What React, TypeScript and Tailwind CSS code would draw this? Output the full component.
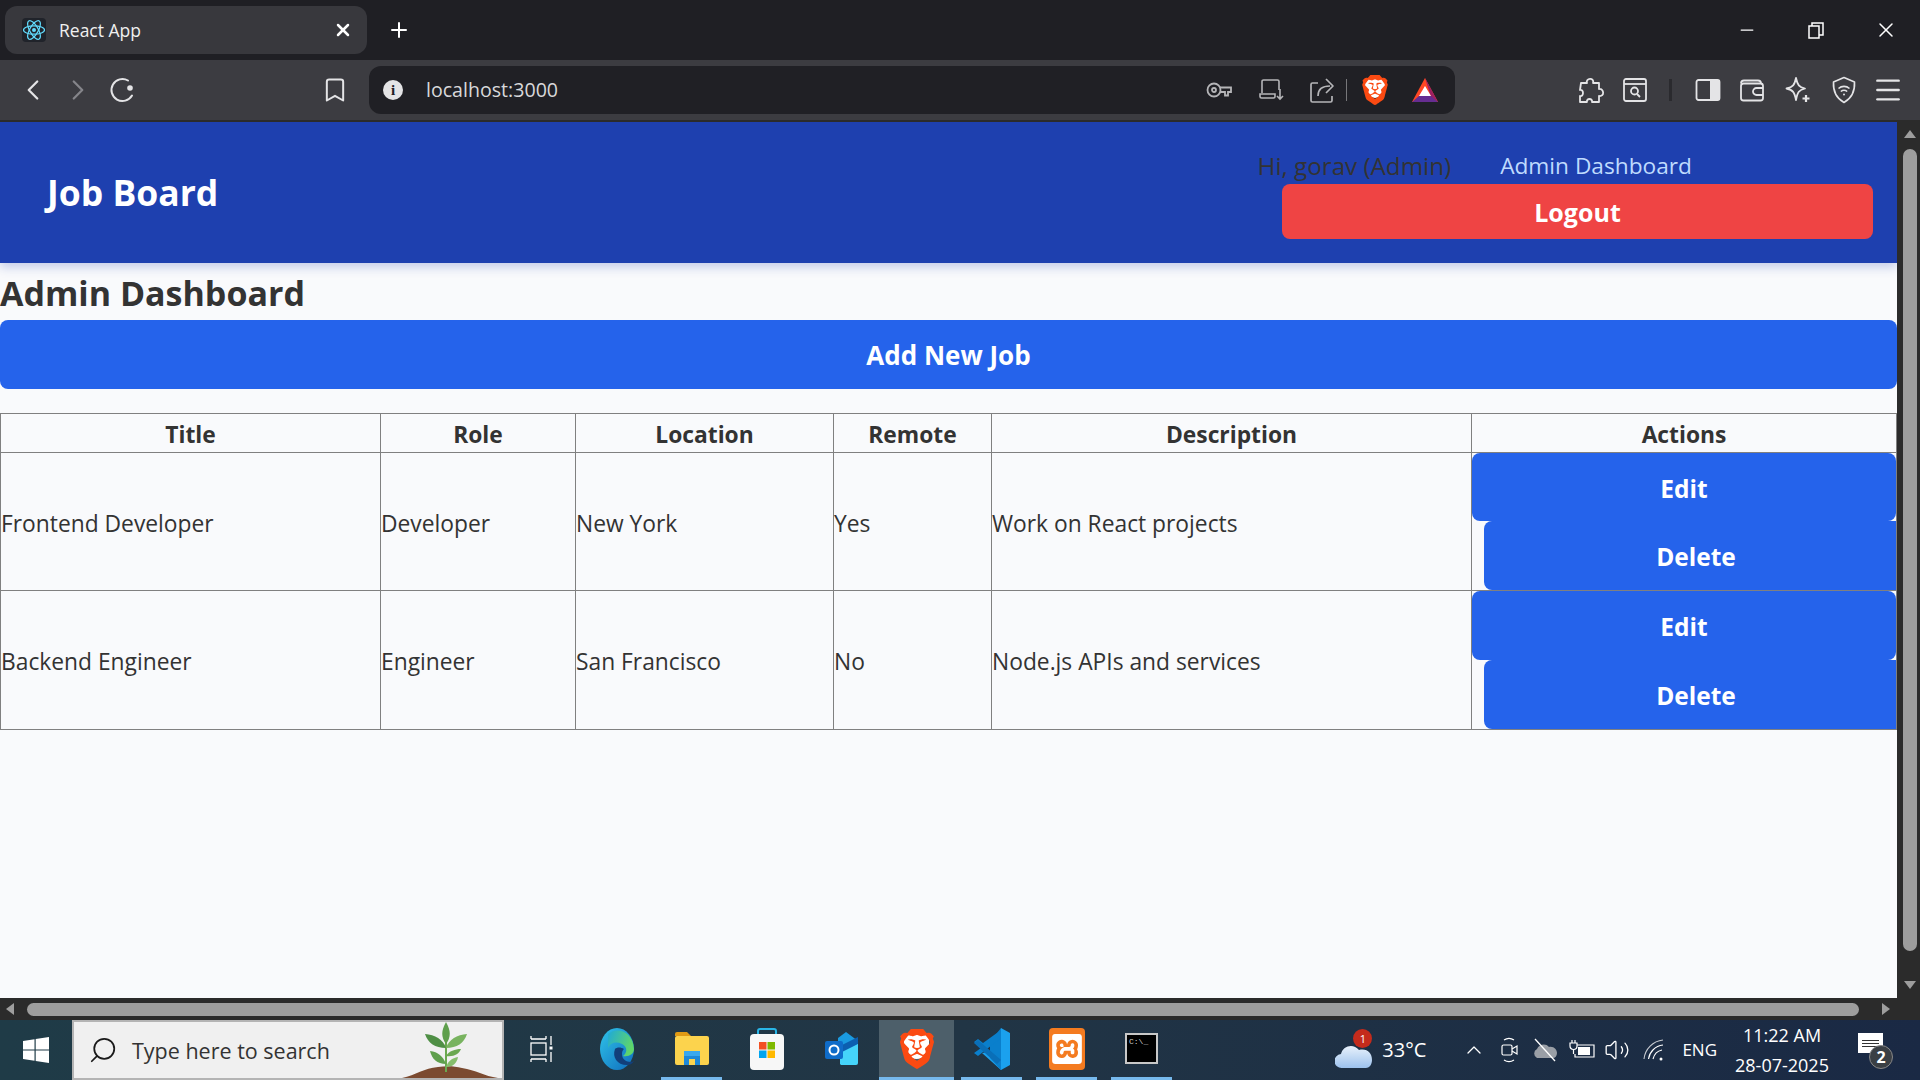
import React from "react";
import {
  Bookmark,
  ChevronLeft,
  ChevronRight,
  ChevronUp,
  Menu,
  Minus,
  Plus,
  Search,
  Volume2,
  X,
} from "lucide-react";
import { SiBrave, SiXampp } from "react-icons/si";

const jobs = [
  { title: "Frontend Developer", role: "Developer", location: "New York", remote: "Yes", description: "Work on React projects" },
  { title: "Backend Engineer", role: "Engineer", location: "San Francisco", remote: "No", description: "Node.js APIs and services" },
];

const headers = ["Title", "Role", "Location", "Remote", "Description", "Actions"];

const BraveLogo = ({ size }: { size: number }) => (
  <span className="relative flex items-center justify-center" style={{ width: size, height: size }}>
    <span className="absolute left-[18%] top-[14%] h-[62%] w-[64%] rounded-b-full bg-white" />
    <SiBrave className="relative text-[#fb4a12]" size={size} />
  </span>
);

const BatLogo = () => (
  <svg width="28" height="28" viewBox="0 0 28 28">
    <polygon points="14,2 1,26 27,26" fill="#ff4724" />
    <polygon points="14,2 27,26 20,21" fill="#9e1f63" />
    <polygon points="1,26 27,26 20,20 8,20" fill="#662d91" />
    <polygon points="14,10 8,20 20,20" fill="#fff" />
  </svg>
);

const ReactLogo = () => (
  <svg width="24" height="24" viewBox="0 0 24 24" className="bg-[#20232a] rounded-sm" fill="none" stroke="#61dafb" strokeWidth="1.2">
    <circle cx="12" cy="12" r="2" fill="#61dafb" stroke="none" />
    <ellipse cx="12" cy="12" rx="10.5" ry="4.2" />
    <ellipse cx="12" cy="12" rx="10.5" ry="4.2" transform="rotate(60 12 12)" />
    <ellipse cx="12" cy="12" rx="10.5" ry="4.2" transform="rotate(120 12 12)" />
  </svg>
);

const ReloadIcon = () => (
  <svg width="28" height="28" viewBox="0 0 28 28" fill="none" stroke="#e4e4e6" strokeWidth="2">
    <path d="M24 19.500A11 11 0 1 1 20 4.500" strokeLinecap="round" />
    <circle cx="22" cy="12" r="2.800" fill="#e4e4e6" stroke="none" />
  </svg>
);

const KeyIcon = () => (
  <svg width="26" height="24" viewBox="0 0 26 24" fill="none" stroke="#b5b5b8" strokeWidth="1.800">
    <circle cx="8" cy="12" r="6.500" />
    <circle cx="8" cy="12" r="2" />
    <path d="M14 9.500h11v4.500h-3v3.500h-3V14h-5" />
  </svg>
);

const CastIcon = () => (
  <svg width="26" height="26" viewBox="0 0 26 26" fill="none" stroke="#b5b5b8" strokeWidth="1.600">
    <path d="M3 16V4.500A1.500 1.500 0 0 1 4.500 3h14A1.500 1.500 0 0 1 20 4.500V13" />
    <path d="M1 17h15v2.500a1.500 1.500 0 0 1-1.500 1.500h-12A1.500 1.500 0 0 1 1 19.500z" />
    <path d="M21 12v10M18 19l3 3 3-3" />
  </svg>
);

const ShareIcon = () => (
  <svg width="26" height="28" viewBox="0 0 26 28" fill="none" stroke="#b5b5b8" strokeWidth="1.700" strokeLinejoin="round">
    <path d="M9 7H3.500A1.500 1.500 0 0 0 2 8.500v16A1.500 1.500 0 0 0 3.500 26h18a1.500 1.500 0 0 0 1.500-1.500V20" />
    <path d="M9 20c0-7 4-10 12-10" />
    <path d="M17 3l7 7-7 7" />
  </svg>
);

const ReaderIcon = () => (
  <svg width="26" height="26" viewBox="0 0 26 26" fill="none" stroke="#e4e4e6" strokeWidth="1.8">
    <rect x="2" y="2" width="22" height="22" rx="2" />
    <path d="M2 7h22" />
    <circle cx="12.500" cy="14" r="3.500" />
    <path d="M15 17l3 3" />
  </svg>
);

const SidebarIcon = () => (
  <svg width="26" height="24" viewBox="0 0 26 24">
    <rect x="1.500" y="2" width="23" height="20" rx="2" fill="none" stroke="#e4e4e6" strokeWidth="1.800" />
    <rect x="15" y="2" width="10" height="20" rx="1" fill="#e4e4e6" />
  </svg>
);

const WalletIcon = () => (
  <svg width="26" height="26" viewBox="0 0 26 26" fill="none" stroke="#e4e4e6" strokeWidth="1.800">
    <path d="M2 6.500A3 3 0 0 1 5 3.500h14a3 3 0 0 1 3 3" />
    <rect x="2" y="6.500" width="22" height="17" rx="2.500" />
    <path d="M24 11h-6.500a3.500 3.500 0 0 0 0 7H24" />
  </svg>
);

const LeoIcon = () => (
  <svg width="28" height="28" viewBox="0 0 28 28" fill="none" stroke="#e4e4e6" strokeWidth="1.800">
    <path d="M12 2c1.500 7 3 9 9 10.500C15 14 13.500 16 12 24 10.500 16 9 14 2.500 12.500 9 11 10.500 9 12 2z" strokeLinejoin="round" />
    <path d="M22 19v7M18.500 22.500h7" strokeWidth="2.200" />
  </svg>
);

const VpnIcon = () => (
  <svg width="26" height="28" viewBox="0 0 26 28" fill="none" stroke="#e4e4e6" strokeWidth="1.600">
    <path d="M13 1.500 23.500 6c.5 9-2.500 16-10.500 20.500C5 22 2 15 2.500 6z" strokeLinejoin="round" />
    <path d="M7.500 12.500c3.200-2.800 7.800-2.800 11 0M9.800 15.500c2-1.600 4.400-1.600 6.400 0" />
    <circle cx="13" cy="18.500" r="1" fill="#e4e4e6" stroke="none" />
  </svg>
);

const PuzzleIcon = () => (
  <svg width="28" height="30" viewBox="0 0 28 30" fill="none" stroke="#e4e4e6" strokeWidth="1.800" strokeLinejoin="round">
    <path d="M4 8h6c-2-5 8-6 6 0h6v6c5-1 6 8 0 7v6h-7c1-4-6-4-5 0H3v-6c4 1 4-7 0-6z" />
  </svg>
);

const RestoreIcon = () => (
  <svg width="16" height="17" viewBox="0 0 16 17" fill="none" stroke="#fff" strokeWidth="1.500">
    <rect x="1" y="4" width="10" height="12" />
    <path d="M4 4V1h11v12h-4" />
  </svg>
);

const WindowsLogo = () => (
  <svg width="26" height="26" viewBox="0 0 26 26" fill="#fff">
    <polygon points="0,4 11.500,2.300 11.500,12.400 0,12.400" />
    <polygon points="12.700,2.100 26,0 26,12.400 12.700,12.400" />
    <polygon points="0,13.600 11.500,13.600 11.500,23.700 0,22" />
    <polygon points="12.700,13.600 26,13.600 26,26 12.700,23.900" />
  </svg>
);

const PlantArt = () => (
  <svg width="100" height="58" viewBox="0 0 100 58">
    <path d="M0 58c14-3 22-10 36-11 8-1 16-1 24 1 14 2 22 8 36 10z" fill="#7b4a30" />
    <path d="M44 52V20" stroke="#6aa84f" strokeWidth="2" />
    <path d="M44 2c5 9 5 15 0 22-5-7-5-13 0-22z" fill="#5f9f4c" />
    <path d="M44 28c3-9 11-13 21-14-3 9-10 14-21 14z" fill="#78b35f" />
    <path d="M44 28c-3-9-11-13-21-14 3 9 10 14 21 14z" fill="#4f8f45" />
    <path d="M44 36c3-5 9-7 15-7-2 5-7 8-15 7z" fill="#6aa84f" />
    <path d="M44 44c-3-8-8-12-16-13 2 8 7 13 16 13z" fill="#5f9f4c" />
    <path d="M44 47c2-6 6-9 12-10-1 6-5 10-12 10z" fill="#86bd6c" />
  </svg>
);

const TaskViewIcon = () => (
  <svg width="24" height="28" viewBox="0 0 24 28" fill="none" stroke="#fff" strokeWidth="1.300">
    <path d="M1 4h15M1 24h15M16 1v3M1 1v3M1 24v3M16 24v3" />
    <rect x="1" y="8" width="15" height="12" />
    <path d="M21 1v9M21 17v10" />
    <rect x="19.500" y="11.500" width="3" height="3" fill="#fff" stroke="none" />
  </svg>
);

const EdgeLogo = () => (
  <svg width="34" height="42" viewBox="0 0 34 42">
    <defs>
      <linearGradient id="edge-a" x1="0" y1="0" x2="1" y2="1">
        <stop offset="0" stopColor="#2fc3e8" />
        <stop offset="1" stopColor="#0f6cbd" />
      </linearGradient>
      <linearGradient id="edge-b" x1="0" y1="0" x2="1" y2="0.400">
        <stop offset="0" stopColor="#1fa9d8" />
        <stop offset="1" stopColor="#5fd66a" />
      </linearGradient>
    </defs>
    <ellipse cx="17" cy="21" rx="17" ry="21" fill="url(#edge-a)" />
    <path d="M8 6c10-8 25-2 26 15 0 5-5 8-11 7 4-3 5-9-1-12-6-3-12-1-14 4 0-6 0-10 0-14z" fill="url(#edge-b)" />
    <path d="M15 21c-3 8 2 16 12 16 3 0 5-1 7-4-3 2-12 1-12-7 0-3 1-4 2-5-3-2-7-2-9 0z" fill="#123f7a" />
  </svg>
);

const FolderIcon = () => (
  <svg width="36" height="34" viewBox="0 0 36 34">
    <path d="M1 2a2 2 0 0 1 2-2h10l4 4H1z" fill="#e09a14" />
    <rect x="1" y="4" width="34" height="29" rx="2" fill="#fcd34d" />
    <path d="M10 33V20h16v13h-5v-6h-6v6z" fill="#1e88d8" />
    <rect x="10" y="19" width="16" height="5" fill="#3ba8ee" />
  </svg>
);

const StoreIcon = () => (
  <svg width="36" height="42" viewBox="0 0 36 42">
    <path d="M9 9V3a2 2 0 0 1 2-2h14a2 2 0 0 1 2 2v6" fill="none" stroke="#29b6e8" strokeWidth="2" />
    <rect x="1" y="6" width="34" height="36" rx="4" fill="#f7f7f7" />
    <rect x="10" y="14" width="7.500" height="7.500" fill="#f25022" />
    <rect x="18.500" y="14" width="7.500" height="7.500" fill="#7fba00" />
    <rect x="10" y="22.500" width="7.500" height="7.500" fill="#00a4ef" />
    <rect x="18.500" y="22.500" width="7.500" height="7.500" fill="#ffb900" />
  </svg>
);

const OutlookIcon = () => (
  <svg width="36" height="36" viewBox="0 0 36 36">
    <path d="M14 7 22 1l12 9v12H14z" fill="#1a9ae0" />
    <path d="M14 16 34 6v7L20 22z" fill="#0c5fb0" />
    <path d="M16 33V22l18-9v19a2 2 0 0 1-2 2H17z" fill="#45d4fa" />
    <rect x="1" y="10" width="18" height="18" rx="2" fill="#0f6cc9" />
    <circle cx="10" cy="19" r="4.500" fill="none" stroke="#fff" strokeWidth="2" />
  </svg>
);

const VsCodeIcon = () => (
  <svg width="36" height="42" viewBox="0 0 36 42">
    <path d="M27 0 36 5v32l-9 5-19-17 19-4z" fill="#1ba1ee" />
    <path d="M27 0v42L16 30V14z" fill="#0a7fcc" />
    <path d="M27 10 9 24l-5 4-4-3 7-5-7-6 4-3 5 4 18-13z" fill="#0a7fcc" />
    <path d="M27 32 4 12l-4 3 23 21z" fill="#0a6fb8" />
  </svg>
);

const CmdIcon = () => (
  <div className="flex h-[31px] w-[33px] flex-col border-2 border-[#c8c8c8] bg-black">
    <div className="h-[2px] w-full" />
    <span className="pl-[2px] font-['Liberation_Mono',monospace] text-[8px] leading-[10px] text-[#d0d0d0]">C:\_</span>
  </div>
);

const WeatherIcon = () => (
  <div className="relative h-[38px] w-[38px]">
    <svg width="38" height="30" viewBox="0 0 38 30" className="absolute bottom-0 left-0">
      <defs>
        <linearGradient id="cloud" x1="0" y1="0" x2="0" y2="1">
          <stop offset="0" stopColor="#e8f1fb" />
          <stop offset="1" stopColor="#9cc2ee" />
        </linearGradient>
      </defs>
      <path d="M7 29a7 7 0 0 1-1-14C8 7 18 4 24 11c8-2 13 3 13 10 0 5-3 8-6 8z" fill="url(#cloud)" />
    </svg>
    <div className="absolute left-[18px] top-[-2px] flex h-[19px] w-[19px] items-center justify-center rounded-full bg-[#c42b1c] text-[11px] leading-none text-white">
      1
    </div>
  </div>
);

const MeetIcon = () => (
  <svg width="18" height="26" viewBox="0 0 18 26" fill="none" stroke="#fff" strokeWidth="1.200">
    <path d="M3 3c3-2 7-2 10 0M3 23c3 2 7 2 10 0" />
    <rect x="1" y="8" width="10" height="10" rx="1.500" />
    <path d="M11 12l5-3v8l-5-3" />
  </svg>
);

const OneDriveOff = () => (
  <svg width="26" height="24" viewBox="0 0 26 24">
    <path d="M5 20a5 5 0 0 1 0-9c2-5 9-6 12-2 5-1 8 3 8 6 0 3-2 5-4 5z" fill="#9a9fa6" />
    <path d="M3 1l20 22" stroke="#fff" strokeWidth="1.300" />
  </svg>
);

const BatteryIcon = () => (
  <svg width="26" height="20" viewBox="0 0 26 20" fill="none" stroke="#fff" strokeWidth="1.200">
    <path d="M3 0v3M6 0v3M1 3h7v3a3.500 3.500 0 0 1-7 0zM4.500 9.500V14" />
    <path d="M8 5h17v12H6v-3" />
    <rect x="9" y="7" width="12" height="8" fill="#fff" stroke="none" />
  </svg>
);

const WifiIcon = () => (
  <svg width="22" height="22" viewBox="0 0 22 22" fill="none" stroke="#fff" strokeWidth="1.100">
    <path d="M1 20C2 10 10 2 20 1" stroke="#c8ccd2" />
    <path d="M5.500 20C6.500 13 12 7 20 6" />
    <path d="M10 20c1-4 4-8 9-9" />
    <circle cx="18" cy="20" r="1.500" fill="#fff" stroke="none" />
  </svg>
);

// vertical page scrollbar, thumb 149-951
const VerticalScrollbar = () => (
  <div className="flex w-[23px] shrink-0 flex-col items-center bg-[#2b2b2b] pl-[3px]">
    <div className="mt-[8px] h-0 w-0 border-x-[6px] border-b-[8px] border-x-transparent border-b-[#9e9e9e]" />
    <div className="mt-[11px] h-[802px] w-[14px] rounded-full bg-[#9e9e9e]" />
    <div className="mt-[30px] h-0 w-0 border-x-[6px] border-t-[8px] border-x-transparent border-t-[#9e9e9e]" />
  </div>
);

const HorizontalScrollbar = () => (
  <div className="flex h-[22px] shrink-0 items-center bg-[#2b2b2b] pl-[6px]">
    <div className="h-0 w-0 border-y-[6px] border-r-[8px] border-y-transparent border-r-[#9e9e9e]" />
    <div className="ml-[13px] h-[13px] w-[1832px] rounded-full bg-[#9e9e9e]" />
    <div className="ml-[23px] h-0 w-0 border-y-[6px] border-l-[8px] border-y-transparent border-l-[#9e9e9e]" />
  </div>
);

const TaskSlot = ({ children, running, active }: { children: React.ReactNode; running?: boolean; active?: boolean }) => (
  <div className={`relative flex h-full w-[75px] shrink-0 items-center justify-center pb-[3px] ${active ? "bg-[#4d5f6a]" : ""}`}>
    {children}
    {running && <div className="absolute inset-x-[7px] bottom-0 h-[3px] bg-[#76b9ed]" />}
    {active && <div className="absolute inset-x-0 bottom-0 h-[3px] bg-[#76b9ed]" />}
  </div>
);

export default function App() {
  return (
    <div className="flex h-[1080px] w-[1920px] flex-col overflow-hidden bg-[#1f1f24] font-['Open_Sans',sans-serif] text-[#333]">
      {/* tab strip */}
      <div className="flex h-[60px] shrink-0 items-center bg-[#1f1f24] pl-[5px] text-white">
        <div className="flex h-[48px] w-[362px] items-center rounded-xl bg-[#38383d] pl-[17px] pr-[14px]">
          <ReactLogo />
          <span className="ml-[13px] flex-1 text-[17.5px] text-[#f0f0f0]">React App</span>
          <X size={20} strokeWidth={3} />
        </div>
        <Plus className="ml-[20px]" size={24} strokeWidth={2} />
        <div className="flex-1" />
        <Minus className="mr-[51px]" size={20} strokeWidth={1.5} />
        <RestoreIcon />
        <X className="ml-[50px] mr-[22px]" size={24} strokeWidth={1.5} />
      </div>

      {/* toolbar */}
      <div className="flex h-[60px] shrink-0 items-center bg-[#3c3c41] text-[#e4e4e6]">
        <ChevronLeft className="ml-[16px]" size={34} strokeWidth={1.6} />
        <ChevronRight className="ml-[11px] text-[#85858a]" size={34} strokeWidth={1.6} />
        <div className="ml-[13px]"><ReloadIcon /></div>
        <Bookmark className="ml-[185px]" size={28} strokeWidth={1.7} />
        <div className="ml-[20px] flex h-[48px] w-[1086px] items-center rounded-xl bg-[#202025] pl-[14px]">
          <div className="flex h-[20px] w-[20px] items-center justify-center rounded-full bg-[#e4e4e6] font-['Liberation_Serif',serif] text-[15px] font-bold text-[#202025]">
            i
          </div>
          <span className="ml-[23px] text-[19.6px] text-[#d8d8da]">localhost:3000</span>
          <div className="flex-1" />
          <KeyIcon />
          <div className="ml-[27px]"><CastIcon /></div>
          <div className="ml-[24px]"><ShareIcon /></div>
          <div className="ml-[11px] h-[22px] w-[1px] bg-[#77777a]" />
          <div className="ml-[13px]"><BraveLogo size={30} /></div>
          <div className="ml-[21px] mr-[16px]"><BatLogo /></div>
        </div>
        <div className="ml-[122px]"><PuzzleIcon /></div>
        <div className="ml-[17px]"><ReaderIcon /></div>
        <div className="ml-[21px] h-[22px] w-[3px] bg-[#2a2a2e]" />
        <div className="ml-[23px]"><SidebarIcon /></div>
        <div className="ml-[18px]"><WalletIcon /></div>
        <div className="ml-[19px]"><LeoIcon /></div>
        <div className="ml-[19px]"><VpnIcon /></div>
        <Menu className="ml-[15px]" size={32} strokeWidth={1.8} />
      </div>
      <div className="h-[2px] shrink-0 bg-[#2b2b2b]" />

      {/* page */}
      <div className="flex h-[876px] shrink-0">
        <div className="h-full w-[1897px] shrink-0 overflow-hidden bg-[#f9fafc]">
          <header className="relative flex h-[141px] items-center justify-between bg-[#1e40af] pl-[47px] pr-[24px] shadow-[0_4px_10px_rgba(30,64,175,0.25)]">
            <h1 className="text-[35.500px] font-bold text-white">Job Board</h1>
            <div className="flex flex-col items-end pt-[3px]">
              <div className="mr-[181px] flex h-[40px] items-center gap-[49px]">
                <span className="pt-[4px] text-[24.2px] text-[#333]">Hi, gorav (Admin)</span>
                <a className="pt-[4px] text-[22.7px] text-[#bfdbfe]">Admin Dashboard</a>
              </div>
              <button className="mb-[5px] h-[55px] w-[591px] rounded-lg bg-[#ef4444] pt-[3px] text-[25px] font-bold text-white">
                Logout
              </button>
            </div>
          </header>

          <main>
            <h2 className="h-[57px] text-[34px] font-bold leading-[60px]">Admin Dashboard</h2>
            <button className="h-[69px] w-full rounded-lg bg-[#2563eb] pt-[2px] text-[26px] font-bold text-white">
              Add New Job
            </button>
            <table className="mt-[24px] w-full table-fixed border-collapse text-[22.8px]">
              <colgroup>
                <col className="w-[380px]" />
                <col className="w-[195px]" />
                <col className="w-[258px]" />
                <col className="w-[158px]" />
                <col className="w-[480px]" />
                <col />
              </colgroup>
              <thead>
                <tr className="h-[39px]">
                  {headers.map((h) => (
                    <th key={h} className="border border-[#808080] p-0 pt-[4px] font-bold">
                      {h}
                    </th>
                  ))}
                </tr>
              </thead>
              <tbody>
                {jobs.map((job, i) => (
                  <tr key={job.title} className={i === 0 ? "h-[138px]" : "h-[139px]"}>
                    <td className="border border-[#808080] p-0 pt-[4px]">{job.title}</td>
                    <td className="border border-[#808080] p-0 pt-[4px]">{job.role}</td>
                    <td className="border border-[#808080] p-0 pt-[4px]">{job.location}</td>
                    <td className="border border-[#808080] p-0 pt-[4px]">{job.remote}</td>
                    <td className="border border-[#808080] p-0 pt-[4px]">{job.description}</td>
                    <td className="border border-[#808080] p-0">
                      <button className={`block w-full rounded-lg bg-[#2563eb] pt-[4px] text-[24.500px] font-bold text-white ${i === 0 ? "h-[68px]" : "h-[69px]"}`}>
                        Edit
                      </button>
                      <button className="ml-[12px] block h-[69px] w-full rounded-lg bg-[#2563eb] pt-[4px] text-[24.500px] font-bold text-white">
                        Delete
                      </button>
                    </td>
                  </tr>
                ))}
              </tbody>
            </table>
          </main>
        </div>
        <VerticalScrollbar />
      </div>
      <HorizontalScrollbar />

      {/* windows taskbar */}
      <div className="flex h-[60px] shrink-0 items-center bg-gradient-to-r from-[#1f3b47] via-[#213545] to-[#1a2944] text-white">
        <div className="flex h-full w-[72px] shrink-0 items-center justify-center">
          <WindowsLogo />
        </div>
        <div className="flex h-full w-[432px] shrink-0 items-center overflow-hidden border-2 border-[#b4b4b4] bg-[#f0f0f0] pl-[14px]">
          <Search className="-scale-x-100 text-[#1a1a1a]" size={30} strokeWidth={1.400} />
          <span className="ml-[14px] flex-1 pt-[2px] text-[21.500px] text-[#333]">Type here to search</span>
          <div className="self-end"><PlantArt /></div>
        </div>
        <TaskSlot><TaskViewIcon /></TaskSlot>
        <TaskSlot><EdgeLogo /></TaskSlot>
        <TaskSlot running><FolderIcon /></TaskSlot>
        <TaskSlot><StoreIcon /></TaskSlot>
        <TaskSlot><OutlookIcon /></TaskSlot>
        <TaskSlot active><BraveLogo size={40} /></TaskSlot>
        <TaskSlot running><VsCodeIcon /></TaskSlot>
        <TaskSlot running>
          <div className="flex h-[42px] w-[36px] items-center justify-center rounded bg-[#f47b20]">
            <SiXampp className="text-white" size={30} />
          </div>
        </TaskSlot>
        <TaskSlot running><CmdIcon /></TaskSlot>
        <div className="flex-1" />
        <WeatherIcon />
        <span className="ml-[9px] text-[20px]">33°C</span>
        <ChevronUp className="ml-[36px]" size={24} strokeWidth={1.3} />
        <div className="ml-[15px]"><MeetIcon /></div>
        <div className="ml-[13px]"><OneDriveOff /></div>
        <div className="ml-[11px]"><BatteryIcon /></div>
        <Volume2 className="ml-[9px]" size={26} strokeWidth={1.2} />
        <div className="ml-[13px]"><WifiIcon /></div>
        <span className="ml-[17px] text-[17px]">ENG</span>
        <div className="ml-[13px] flex w-[104px] flex-col items-center text-[18px] leading-[30px]">
          <span>11:22 AM</span>
          <span>28-07-2025</span>
        </div>
        <div className="relative ml-[24px] mr-[36px] h-[50px] w-[26px]">
          <div className="absolute left-0 top-[8px] flex h-[20px] w-[25px] flex-col justify-center gap-[2px] bg-white px-[4px]">
            <div className="h-[1px] bg-[#333]" />
            <div className="h-[1px] bg-[#333]" />
            <div className="h-[1px] bg-[#333]" />
          </div>
          <div className="absolute left-[11px] top-[20px] flex h-[24px] w-[24px] items-center justify-center rounded-full border border-[#888] bg-[#3a3f44] text-[16px] font-bold leading-none">
            2
          </div>
        </div>
      </div>
    </div>
  );
}
